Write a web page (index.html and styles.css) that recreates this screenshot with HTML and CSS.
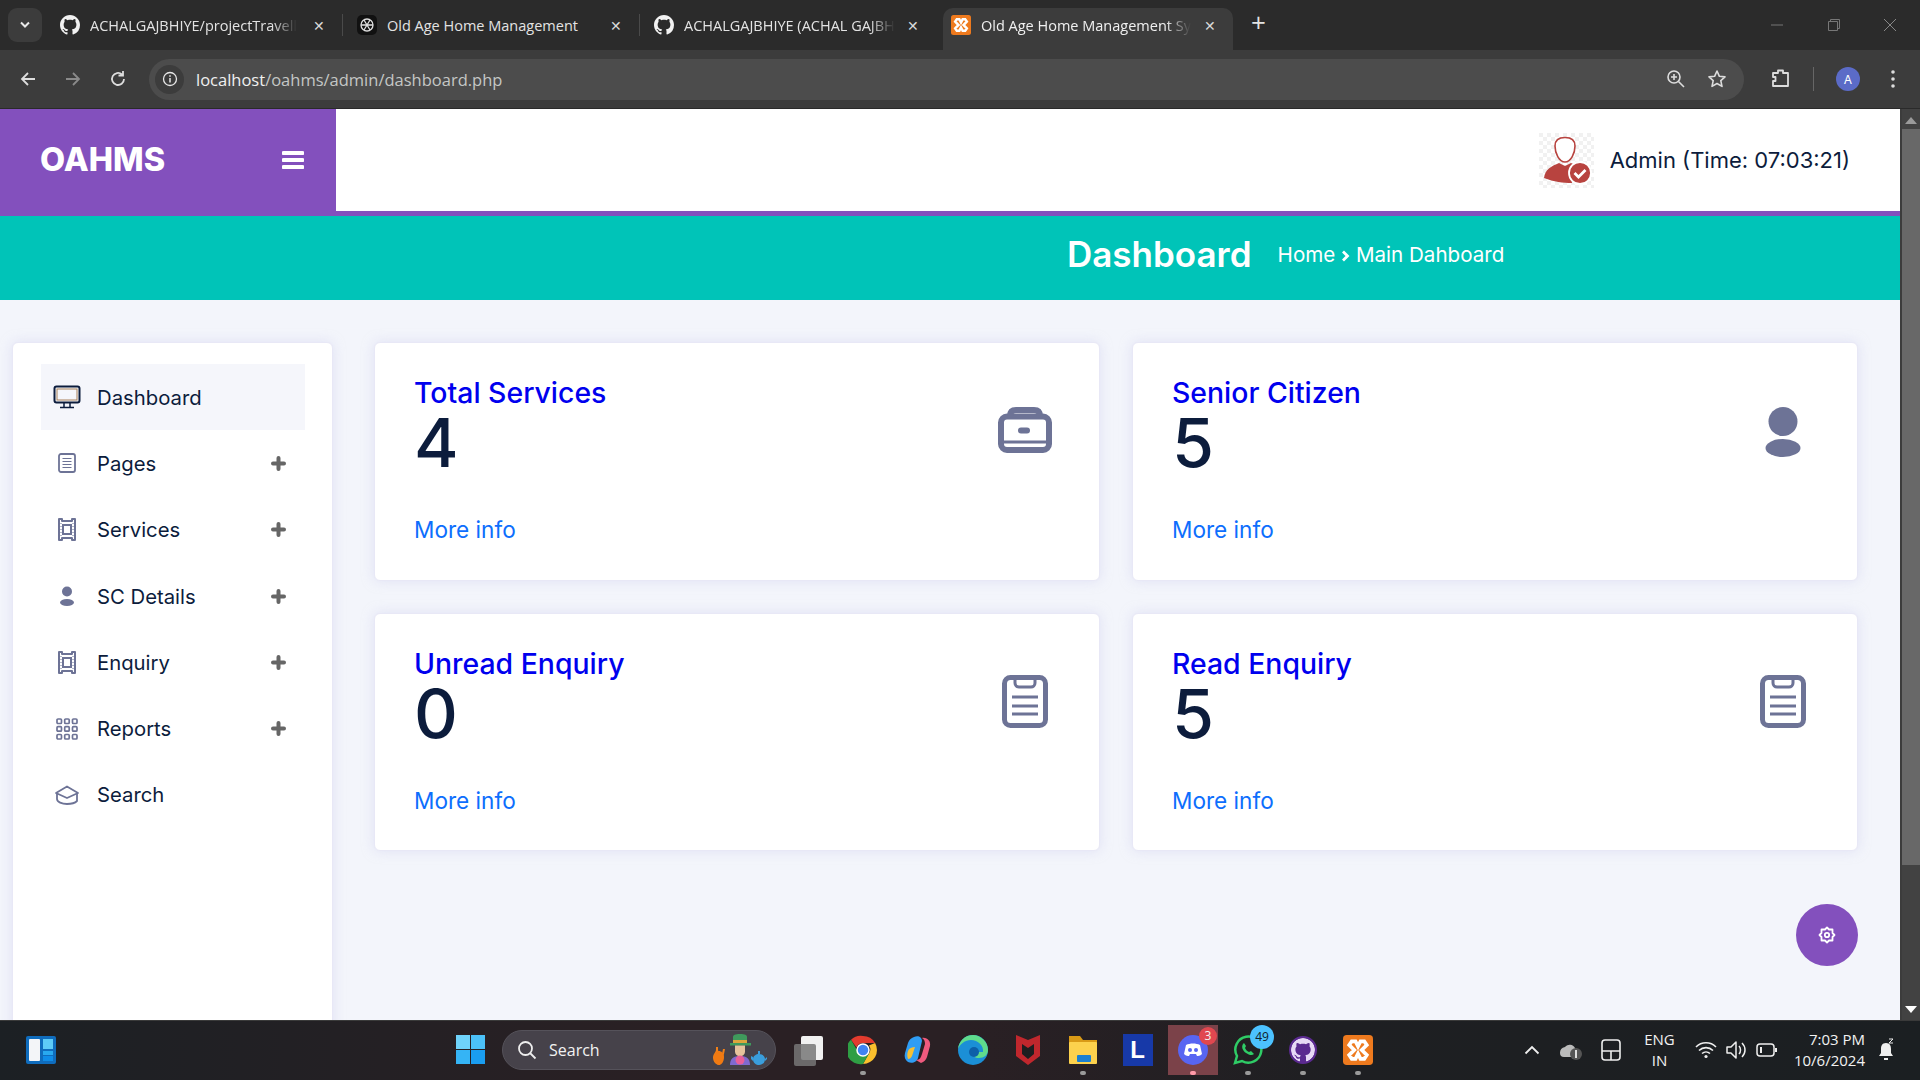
FILE: index.html
```html
<!DOCTYPE html>
<html lang="en">
<head>
  <meta charset="UTF-8" />
  <title>Old Age Home Management System</title>
  <link rel="stylesheet" href="styles.css">
</head>
<body>

  <svg class="defs" width="0" height="0">
    <symbol id="gh" viewBox="0 0 16 16"><path fill="currentColor" d="M8 0C3.58 0 0 3.58 0 8c0 3.54 2.29 6.53 5.47 7.59.4.07.55-.17.55-.38 0-.19-.01-.82-.01-1.49-2.01.37-2.53-.49-2.69-.94-.09-.23-.48-.94-.82-1.13-.28-.15-.68-.52-.01-.53.63-.01 1.08.58 1.23.82.72 1.21 1.87.87 2.33.66.07-.52.28-.87.51-1.07-1.78-.2-3.64-.89-3.64-3.95 0-.87.31-1.59.82-2.15-.08-.2-.36-1.02.08-2.12 0 0 .67-.21 2.2.82.64-.18 1.32-.27 2-.27s1.36.09 2 .27c1.53-1.04 2.2-.82 2.2-.82.44 1.1.16 1.92.08 2.12.51.56.82 1.27.82 2.15 0 3.07-1.87 3.75-3.65 3.95.29.25.54.73.54 1.48 0 1.07-.01 1.93-.01 2.2 0 .21.15.46.55.38A8.013 8.013 0 0016 8c0-4.42-3.58-8-8-8z"/></symbol>
    <symbol id="xampp" viewBox="0 0 24 24"><rect width="24" height="24" rx="3" fill="#ee7a1e"/><path fill="none" stroke="#fff" stroke-width="3" d="M7 5h3l2 4 2-4h3l2 3-4 4 4 4-2 3h-3l-2-4-2 4H7l-2-3 4-4-4-4z"/></symbol>
    <symbol id="frame" viewBox="0 0 20 23"><g fill="none" stroke="#6d7396" stroke-width="2"><path d="M2 1h3v2h10V1h3v21h-3v-2H5v2H2z" stroke-linejoin="round"/><rect x="6" y="7" width="8" height="9"/></g><path stroke="#6d7396" stroke-dasharray="1 2" d="M4 5v13M16 5v13"/></symbol>
    <symbol id="clip" viewBox="0 0 46 53"><g fill="none" stroke="#6d7396"><rect x="2.500" y="2.500" width="41" height="48" rx="6" stroke-width="5"/><path d="M13 4v4a4 4 0 004 4h12a4 4 0 004-4V4" stroke-width="3"/><path d="M10 22h26M10 31h26M10 39h26" stroke-width="3"/></g></symbol>
    <symbol id="plus" viewBox="0 0 15 15"><path stroke="#666" stroke-width="4" stroke-linecap="round" d="M7.500 2v11M2 7.500h11"/></symbol>
  </svg>

  <div class="tabstrip">
    <div class="tab-menu"><svg width="12" height="8" viewBox="0 0 12 8"><path d="M2 1.500l4 4 4-4" fill="none" stroke="#e8e8e8" stroke-width="2"/></svg></div>
    <div class="tabs">
      <div class="tab sep">
        <svg class="favicon"><use href="#gh"/></svg>
        <span class="tab-title fade">ACHALGAJBHIYE/projectTravell</span>
        <span class="tab-close">&#10005;</span>
      </div>
      <div class="tab sep">
        <svg class="favicon" viewBox="0 0 20 20"><rect width="20" height="20" rx="5" fill="#111"/><g fill="none" stroke="#ddd" stroke-width="1.300"><circle cx="10" cy="10" r="6"/><path d="M7 5l6 10M13 5L7 15M4 10h12"/></g></svg>
        <span class="tab-title">Old Age Home Management</span>
        <span class="tab-close">&#10005;</span>
      </div>
      <div class="tab">
        <svg class="favicon"><use href="#gh"/></svg>
        <span class="tab-title fade">ACHALGAJBHIYE (ACHAL GAJBH</span>
        <span class="tab-close">&#10005;</span>
      </div>
      <div class="tab active">
        <svg class="favicon"><use href="#xampp"/></svg>
        <span class="tab-title fade">Old Age Home Management Sy</span>
        <span class="tab-close">&#10005;</span>
      </div>
      <span class="new-tab">+</span>
    </div>
    <div class="win-controls">
      <svg width="14" height="14" viewBox="0 0 14 14"><path d="M1 7h12" stroke="#777"/></svg>
      <svg width="14" height="14" viewBox="0 0 14 14"><path d="M3.500 3.500V1.500h9v9h-2M1.500 3.500h9v9h-9z" fill="none" stroke="#777"/></svg>
      <svg width="14" height="14" viewBox="0 0 14 14"><path d="M1 1l12 12M13 1L1 13" stroke="#888"/></svg>
    </div>
  </div>

  <div class="toolbar">
    <svg class="nav-btn" width="18" height="18" viewBox="0 0 18 18"><path d="M16 9H3M9 3L3 9l6 6" fill="none" stroke="#ddd" stroke-width="1.800"/></svg>
    <svg class="nav-btn" width="18" height="18" viewBox="0 0 18 18"><path d="M2 9h13M9 3l6 6-6 6" fill="none" stroke="#8a8a8a" stroke-width="1.800"/></svg>
    <svg class="nav-btn" width="18" height="18" viewBox="0 0 18 18"><path d="M15 9a6 6 0 11-2-4.500M14 1v4.500H9.500" fill="none" stroke="#ddd" stroke-width="1.800"/></svg>
    <div class="omnibox">
      <span class="site-info"><svg width="16" height="16" viewBox="0 0 16 16"><circle cx="8" cy="8" r="6.500" fill="none" stroke="#e8e8e8" stroke-width="1.300"/><path d="M8 7v4.500M8 4.200v1.500" stroke="#e8e8e8" stroke-width="1.500"/></svg></span>
      <span class="url"><b>localhost</b>/oahms/admin/dashboard.php</span>
      <svg class="omni-zoom" width="20" height="20" viewBox="0 0 20 20"><g fill="none" stroke="#ddd" stroke-width="1.600"><circle cx="8" cy="8" r="6"/><path d="M12.500 12.500L18 18M8 5v6M5 8h6"/></g></svg>
      <svg class="omni-star" width="20" height="20" viewBox="0 0 20 20"><path d="M10 2l2.400 5.300 5.600.6-4.200 3.800 1.200 5.700L10 14.500 5 17.400l1.200-5.700L2 7.900l5.600-.6z" fill="none" stroke="#ddd" stroke-width="1.600" stroke-linejoin="round"/></svg>
    </div>
    <svg class="ext" width="20" height="22" viewBox="0 0 20 22"><path d="M2 5h5V2.500h5V5h5v13H2v-5h2.500V9H2z" fill="none" stroke="#ddd" stroke-width="1.800" stroke-linejoin="round"/></svg>
    <span class="tool-sep"></span>
    <span class="profile">A</span>
    <svg class="dots" width="6" height="20" viewBox="0 0 6 20"><g fill="#ddd"><circle cx="3" cy="3" r="1.800"/><circle cx="3" cy="10" r="1.800"/><circle cx="3" cy="17" r="1.800"/></g></svg>
  </div>

  <div class="viewport">
    <div class="page">
      <header class="topbar">
        <div class="brand">
          <span class="logo">OAHMS</span>
          <svg width="22" height="20" viewBox="0 0 22 20"><path d="M1.500 3h19M1.500 10h19M1.500 17h19" stroke="#fff" stroke-width="4" stroke-linecap="round"/></svg>
        </div>
        <div class="top-right">
          <svg class="avatar" width="55" height="55" viewBox="0 0 55 55">
            <defs><pattern id="chk" width="8" height="8" patternUnits="userSpaceOnUse"><rect width="8" height="8" fill="#fff"/><rect width="4" height="4" fill="#f1f1f1"/><rect x="4" y="4" width="4" height="4" fill="#f1f1f1"/></pattern></defs>
            <rect width="55" height="55" fill="url(#chk)"/>
            <path d="M16 13c0-7 5-8.500 10-8.500s10 1.500 10 8.500c0 7-4 16-10 16S16 20 16 13z" fill="#fff" stroke="#b8433f" stroke-width="1.600"/>
            <path d="M5 45c1-9 8-12 15-15l6 3 6-3c5 2 9 4 11 7-6 1-11 7-10 13-9 0-18-1-28-5z" fill="#b8433f"/>
            <circle cx="41" cy="40" r="11" fill="#b8433f" stroke="#fff" stroke-width="1.800"/>
            <path d="M35.500 40l4 4 7-7" fill="none" stroke="#fff" stroke-width="2.800"/>
          </svg>
          <span class="admin-name">Admin (Time: 07:03:21)</span>
        </div>
      </header>

      <div class="page-head">
        <h1>Dashboard</h1>
        <span class="crumbs">Home <svg width="9" height="12" viewBox="0 0 9 12"><path d="M2 1.500L6.500 6 2 10.500" fill="none" stroke="#fff" stroke-width="2.800"/></svg> Main Dahboard</span>
      </div>

      <div class="content">
        <aside class="sidebar">
          <a class="menu-item current">
            <svg class="menu-icon" width="28" height="24" viewBox="0 0 28 24"><rect x="1.500" y="1.500" width="25" height="16" rx="2" fill="none" stroke="#0c1c3c" stroke-width="2"/><rect x="4" y="4" width="20" height="11" fill="none" stroke="#a9815a" stroke-width="1"/><path d="M11 18v4M17 18v4M7 22.500h14" stroke="#0c1c3c" stroke-width="1.500"/></svg>
            <span class="menu-label">Dashboard</span>
          </a>
          <a class="menu-item">
            <svg class="menu-icon" width="18" height="20" viewBox="0 0 18 20"><rect x="1" y="1" width="16" height="18" rx="2" fill="none" stroke="#6d7396" stroke-width="1.800"/><path d="M4.500 5.500h9M4.500 8.500h9M4.500 11.500h9M4.500 14.500h9" stroke="#6d7396"/></svg>
            <span class="menu-label">Pages</span>
            <svg class="menu-plus"><use href="#plus"/></svg>
          </a>
          <a class="menu-item">
            <svg class="menu-icon" width="20" height="23"><use href="#frame"/></svg>
            <span class="menu-label">Services</span>
            <svg class="menu-plus"><use href="#plus"/></svg>
          </a>
          <a class="menu-item">
            <svg class="menu-icon" width="14" height="20" viewBox="0 0 14 20"><circle cx="7" cy="5.500" r="5" fill="#6d7396"/><ellipse cx="7" cy="16.500" rx="7" ry="3.500" fill="#6d7396"/></svg>
            <span class="menu-label">SC Details</span>
            <svg class="menu-plus"><use href="#plus"/></svg>
          </a>
          <a class="menu-item">
            <svg class="menu-icon" width="20" height="23"><use href="#frame"/></svg>
            <span class="menu-label">Enquiry</span>
            <svg class="menu-plus"><use href="#plus"/></svg>
          </a>
          <a class="menu-item">
            <svg class="menu-icon" width="22" height="22" viewBox="0 0 22 22"><g fill="none" stroke="#6d7396" stroke-width="1.700"><rect x="1" y="1" width="4.500" height="4.500" rx="1"/><rect x="8.700" y="1" width="4.500" height="4.500" rx="1"/><rect x="16.500" y="1" width="4.500" height="4.500" rx="1"/><rect x="1" y="8.700" width="4.500" height="4.500" rx="1"/><rect x="8.700" y="8.700" width="4.500" height="4.500" rx="1"/><rect x="16.500" y="8.700" width="4.500" height="4.500" rx="1"/><rect x="1" y="16.500" width="4.500" height="4.500" rx="1"/><rect x="8.700" y="16.500" width="4.500" height="4.500" rx="1"/><rect x="16.500" y="16.500" width="4.500" height="4.500" rx="1"/></g></svg>
            <span class="menu-label">Reports</span>
            <svg class="menu-plus"><use href="#plus"/></svg>
          </a>
          <a class="menu-item">
            <svg class="menu-icon" width="24" height="20" viewBox="0 0 24 20"><g fill="none" stroke="#6d7396" stroke-width="1.800" stroke-linejoin="round"><path d="M1 8l11-6.500L23 8l-11 5z"/><path d="M2 9v5c0 3 5 5 10 5 4 0 8-1 10-3V9"/></g></svg>
            <span class="menu-label">Search</span>
          </a>
        </aside>

        <main class="cards">
          <section class="card">
            <div class="card-body">
              <h2>Total Services</h2>
              <p class="count">4</p>
              <a class="more">More info</a>
            </div>
            <svg class="card-icon" width="54" height="46" viewBox="0 0 54 46"><g fill="none" stroke="#6d7396"><rect x="3" y="9.500" width="48" height="33.500" rx="6" stroke-width="6"/><path d="M12 9c0-4 2-6 6-6h18c4 0 6 2 6 6" stroke-width="6"/><path d="M3 35h48" stroke-width="3"/></g><rect x="20" y="20.500" width="12" height="6" rx="3" fill="#6d7396"/></svg>
          </section>
          <section class="card">
            <div class="card-body">
              <h2>Senior Citizen</h2>
              <p class="count">5</p>
              <a class="more">More info</a>
            </div>
            <svg class="card-icon person" width="36" height="50" viewBox="0 0 36 50"><circle cx="18" cy="14.500" r="14.500" fill="#6d7396"/><ellipse cx="18" cy="41" rx="17.500" ry="9" fill="#6d7396"/></svg>
          </section>
          <section class="card">
            <div class="card-body">
              <h2>Unread Enquiry</h2>
              <p class="count">0</p>
              <a class="more">More info</a>
            </div>
            <svg class="card-icon clip" width="46" height="53"><use href="#clip"/></svg>
          </section>
          <section class="card">
            <div class="card-body">
              <h2>Read Enquiry</h2>
              <p class="count">5</p>
              <a class="more">More info</a>
            </div>
            <svg class="card-icon clip" width="46" height="53"><use href="#clip"/></svg>
          </section>
        </main>
      </div>

      <button class="fab"><svg width="18" height="18" viewBox="0 0 18 18"><g fill="none" stroke="#fff" stroke-width="1.800"><path d="M9 1.500l2 2h3.500v3.500l2 2-2 2v3.500H11l-2 2-2-2H3.500V11l-2-2 2-2V3.500H7z" stroke-linejoin="round"/><circle cx="9" cy="9" r="2.200"/></g></svg></button>
    </div>
    <div class="scrollbar">
      <svg width="12" height="7" viewBox="0 0 12 7"><path d="M6 0l6 7H0z" fill="#9a9a9a"/></svg>
      <div class="thumb"></div>
      <svg class="arrow-down" width="12" height="7" viewBox="0 0 12 7"><path d="M6 7L0 0h12z" fill="#fff"/></svg>
    </div>
  </div>

  <footer class="taskbar">
    <svg class="widget" width="30" height="28" viewBox="0 0 30 28"><rect width="30" height="28" rx="2" fill="#0f6cbd"/><rect x="3" y="3" width="11" height="22" rx="1" fill="#f3f5f8"/><rect x="17" y="3" width="10" height="10" fill="#5ecbf7"/><rect x="17" y="15" width="10" height="4" fill="#29a9ef"/><rect x="17" y="20" width="10" height="5" fill="#0f8ce8"/></svg>
    <svg class="start" width="29" height="29" viewBox="0 0 29 29"><rect width="14" height="14" fill="#6fd3fb"/><rect x="15" width="14" height="14" fill="#4bc1f8"/><rect y="15" width="14" height="14" fill="#35b4f5"/><rect x="15" y="15" width="14" height="14" fill="#1a9df0"/></svg>
    <div class="search-pill">
      <svg width="20" height="20" viewBox="0 0 20 20"><g fill="none" stroke="#eee" stroke-width="1.800"><circle cx="8.500" cy="8.500" r="6.500"/><path d="M13 13l5.500 5.500"/></g></svg>
      <span>Search</span>
      <svg class="pill-art" width="62" height="36" viewBox="0 0 62 36">
        <path d="M15 33c-5 0-7-4-7-8 0-3 3-5 3-7V15h2v3c0 2 3 4 3 7 0 0 1-1 1-3l1-5 2 0-1 5c-1 3-3 5-4 6 0 4 0 12 0 12z" fill="#f08018"/>
        <path d="M9 25c0-4 3-6 5-6s5 2 5 6-2 8-5 8-5-4-5-8z" fill="#f07a12"/>
        <path d="M28 5c0-2 2-3 7-3s7 1 7 3v6H28z" fill="#3f9a5c"/>
        <path d="M25 11h21v2.500H25z" fill="#3f9a5c"/>
        <path d="M28 8h14v3H28z" fill="#dca63c"/>
        <path d="M30 13.500h10v6a5 5 0 01-10 0z" fill="#e6c39c"/>
        <path d="M25 33c0-6 3-9 10-9s10 3 10 9z" fill="#7f6ad0"/>
        <circle cx="35" cy="28" r="4.500" fill="#e8609a"/>
        <path d="M48 27c0-3 3-5 6-5s6 2 6 5c0 4-3 6-6 6s-6-2-6-6z" fill="#3a9edc"/>
        <path d="M53 19h2v3h-2zM60 27l2-2v2l-2 2zM48 25l-2-1v3l2 2z" fill="#3a9edc"/>
      </svg>
    </div>
    <div class="apps">
      <span class="app">
        <svg width="30" height="32" viewBox="0 0 30 32"><rect x="8" y="2" width="22" height="24" rx="2" fill="#f1f1f1"/><rect x="1" y="10" width="22" height="22" rx="2" fill="#777" opacity=".85"/></svg>
      </span>
      <span class="app running">
        <svg width="30" height="30" viewBox="0 0 30 30"><path d="M15 1a14 14 0 0112.100 7H15a7 7 0 00-6.500 4.500L3 4.800A14 14 0 0115 1z" fill="#e33b2e"/><path d="M27.100 8A14 14 0 0115 29l6-10.500a7 7 0 000-8z" fill="#fbc02d"/><path d="M15 29A14 14 0 013 4.800l6 10.200a7 7 0 0012 3.500z" fill="#2f9e44"/><circle cx="15" cy="15" r="6" fill="#3f83f2" stroke="#fff" stroke-width="1.500"/></svg>
      </span>
      <span class="app">
        <svg width="28" height="30" viewBox="0 0 28 30"><path d="M10 2c4-2 8 0 8 4l-4 17c-1 4-6 6-10 4-3-2-4-5-3-9l3-10c1-3 3-5 6-6z" fill="#2f9df4"/><path d="M18 3c5-1 9 3 8 8l-3 11c-1 3-3 5-6 6l-5-3c4 0 5-3 6-6l3-10c0-3-1-5-3-6z" fill="#f05a7e"/><path d="M4 16c1-3 4-4 7-4l-3 9c-1 2-2 3-4 3-1-3-1-5 0-8z" fill="#f6c034"/></svg>
      </span>
      <span class="app">
        <svg width="32" height="32" viewBox="0 0 32 32"><circle cx="16" cy="16" r="15" fill="#1b8fd6"/><path d="M31 16c0 5-4 8-9 8-4 0-7-2-7-5 0-2 2-4 5-4 2 0 1 2 1 3h5c1-6-5-12-12-12-6 0-11 4-13 9C2 7 8 1 16 1c8 0 15 7 15 15z" fill="#5fdc8c"/><circle cx="17" cy="18" r="5" fill="#0d5fa8"/></svg>
      </span>
      <span class="app">
        <svg width="26" height="32" viewBox="0 0 26 32"><path d="M1 1l12 5 12-5v21l-12 9-12-9z" fill="#c0272d"/><path d="M7 10l6 4 6-4v10l-6 5-6-5z" fill="#1e1e20"/></svg>
      </span>
      <span class="app running">
        <svg width="30" height="30" viewBox="0 0 30 30"><path d="M1 1h11l3 4h14v5H1z" fill="#d99a16"/><rect x="1" y="7" width="28" height="22" rx="1" fill="#fcd14d"/><rect x="9" y="20" width="14" height="7" rx="1" fill="#1a7fd0"/></svg>
      </span>
      <span class="app">
        <span class="l-icon">L</span>
      </span>
      <span class="app current running">
        <svg width="30" height="30" viewBox="0 0 30 30"><circle cx="15" cy="15" r="15" fill="#5865f2"/><path d="M8 10c4-2 10-2 14 0l2 9c-2 2-4 2-5 2l-1-2H12l-1 2c-1 0-3 0-5-2z" fill="#fff"/><circle cx="12" cy="15" r="2" fill="#5865f2"/><circle cx="18" cy="15" r="2" fill="#5865f2"/></svg>
        <span class="badge red">3</span>
      </span>
      <span class="app running">
        <svg width="30" height="30" viewBox="0 0 30 30"><path d="M2 28l2-7a13 13 0 115 5z" fill="none" stroke="#2fcc66" stroke-width="2.500"/><path d="M10 9c-2 3 0 7 3 9s6 3 8 1l-3-3-2 1c-2-1-3-2-4-4l1-2-2-3z" fill="#2fcc66"/></svg>
        <span class="badge blue">49</span>
      </span>
      <span class="app running">
        <svg class="gh-app"><use href="#gh"/></svg>
      </span>
      <span class="app running">
        <svg width="30" height="30"><use href="#xampp"/></svg>
      </span>
    </div>
    <div class="tray">
      <svg class="tray-caret" width="16" height="10" viewBox="0 0 16 10"><path d="M1.500 8.500L8 2l6.500 6.500" fill="none" stroke="#eee" stroke-width="1.800"/></svg>
      <svg class="tray-cloud" width="24" height="22" viewBox="0 0 24 22"><path d="M1 14a6 6 0 015-6 6 6 0 0110 1v9H5a4 4 0 01-4-4z" fill="#bbb"/><circle cx="17" cy="15" r="6" fill="#555"/><path d="M17 11v8" stroke="#ddd" stroke-width="2"/></svg>
      <svg class="tray-pad" width="20" height="22" viewBox="0 0 20 22"><rect x="1" y="1" width="18" height="20" rx="3" fill="none" stroke="#eee" stroke-width="1.600"/><path d="M1 12h18M10 12v9" stroke="#eee" stroke-width="1.600"/></svg>
      <div class="lang"><span>ENG</span><span>IN</span></div>
      <svg class="tray-wifi" width="22" height="18" viewBox="0 0 22 18"><g fill="none" stroke="#eee" stroke-width="1.600"><path d="M1 6a14 14 0 0120 0M4 9.500a10 10 0 0114 0M7 12.500a6 6 0 018 0"/></g><circle cx="11" cy="15.500" r="1.600" fill="#eee"/></svg>
      <svg class="tray-vol" width="22" height="20" viewBox="0 0 22 20"><g fill="none" stroke="#eee" stroke-width="1.500"><path d="M1 7v6h4l5 5V2L5 7z" stroke-linejoin="round"/><path d="M13 6c2 2 2 6 0 8M16 3c4 4 4 10 0 14"/></g></svg>
      <svg class="tray-batt" width="22" height="14" viewBox="0 0 22 14"><rect x="1" y="1" width="17" height="12" rx="3" fill="none" stroke="#eee" stroke-width="1.500"/><rect x="4" y="4" width="2" height="6" fill="#eee"/><path d="M20 5v4" stroke="#eee" stroke-width="2"/></svg>
      <div class="clock"><span>7:03 PM</span><span>10/6/2024</span></div>
      <svg class="tray-bell" width="18" height="24" viewBox="0 0 18 24"><path d="M9 5c4 0 5 3 5 6v4l2 3H2l2-3v-4c0-3 1-6 5-6z" fill="#eee"/><path d="M7 20h4v2H7z" fill="#eee"/><path d="M12 1h4l-4 4h4" fill="none" stroke="#eee"/></svg>
    </div>
  </footer>

</body>
</html>
```

FILE: styles.css
```css
* {
  box-sizing: border-box;
}

html, body {
  height: 100%;
}

body {
  margin: 0;
  display: flex;
  flex-direction: column;
  height: 1080px;
  overflow: hidden;
  font-family: Inter, "Liberation Sans", sans-serif;
  background: #f3f5fb;
}

.defs {
  position: absolute;
}

/* browser chrome */
.tabstrip {
  height: 50px;
  display: flex;
  align-items: flex-start;
  background: #2b2b2b;
  color: #e3e3e3;
  font-family: "Open Sans", sans-serif;
  font-size: 14.500px;
}

.tab-menu {
  width: 34px;
  height: 34px;
  margin: 8px 0 0 8px;
  border-radius: 9px;
  background: #3c3c3c;
  display: flex;
  align-items: center;
  justify-content: center;
}

.tabs {
  display: flex;
  margin-left: 3px;
}

.tab {
  width: 290px;
  height: 42px;
  margin: 8px 0 0 7px;
  padding: 0 10px 8px 8px;
  display: flex;
  align-items: center;
  border-radius: 10px 10px 0 0;
  position: relative;
}

.tab.sep::after {
  content: "";
  position: absolute;
  right: -1px;
  top: 6px;
  height: 22px;
  border-right: 1px solid #4a4a4a;
}

.tab.active {
  background: #3c3c3c;
  color: #f0f0f0;
}

.favicon {
  width: 20px;
  height: 20px;
  color: #f2f2f2;
  flex: none;
}

.tab-title {
  margin-left: 10px;
  white-space: nowrap;
}

.tab-title.fade {
  -webkit-mask-image: linear-gradient(to right, #000 88%, transparent);
  mask-image: linear-gradient(to right, #000 88%, transparent);
}

.tab-close {
  margin-left: auto;
  margin-right: 7px;
  font-size: 14px;
  color: #d8d8d8;
}

.new-tab {
  margin: 7px 0 0 18px;
  font-size: 26px;
  line-height: 30px;
  color: #e3e3e3;
}

.win-controls {
  margin-left: auto;
  width: 127px;
  margin-right: 23px;
  height: 50px;
  display: flex;
  align-items: center;
  justify-content: space-between;
}

.toolbar {
  height: 59px;
  padding: 0 0 0 19px;
  background: #3c3c3c;
  border-bottom: 1px solid #2a2a2a;
  display: flex;
  align-items: center;
  color: #ddd;
}

.nav-btn {
  margin-right: 27px;
  flex: none;
}

.omnibox {
  width: 1595px;
  height: 41px;
  margin-left: -5px;
  border-radius: 21px;
  background: #4c4c4c;
  display: flex;
  align-items: center;
  padding-left: 6px;
  flex: none;
}

.site-info {
  width: 29px;
  height: 29px;
  border-radius: 50%;
  background: #3c3c3c;
  display: flex;
  align-items: center;
  justify-content: center;
}

.url {
  margin-left: 12px;
  font-family: "Open Sans", sans-serif;
  font-size: 16.500px;
  color: #c4c7c5;
}

.url b {
  font-weight: 400;
  color: #f0f0f0;
}

.omni-zoom {
  margin-left: auto;
}

.omni-star {
  margin: 0 17px 0 21px;
}

.ext {
  margin-left: 27px;
}

.tool-sep {
  height: 24px;
  margin-left: 22px;
  border-left: 1px solid #666;
}

.profile {
  width: 24px;
  height: 24px;
  margin-left: 22px;
  border-radius: 50%;
  background: #5b6bc7;
  color: #fff;
  font-size: 12px;
  display: flex;
  align-items: center;
  justify-content: center;
}

.dots {
  margin-left: 30px;
}

/* page */
.viewport {
  height: 911px;
  display: flex;
}

.page {
  width: 1900px;
  position: relative;
  overflow: hidden;
  background: #f3f5fb;
}

.scrollbar {
  width: 20px;
  background: #424242;
  border-left: 2px solid #3c3c3c;
  display: flex;
  flex-direction: column;
  align-items: center;
  padding-top: 8px;
}

.thumb {
  width: 18px;
  height: 736px;
  margin-top: 5px;
  background: #686868;
}

.arrow-down {
  margin-top: auto;
  margin-bottom: 7px;
}

.topbar {
  height: 107px;
  display: flex;
  background: #fff;
  border-bottom: 5px solid #8350bd;
}

.brand {
  width: 336px;
  margin-bottom: -5px;
  height: 107px;
  padding: 0 32px 6px 40px;
  background: #8350bd;
  color: #fff;
  display: flex;
  align-items: center;
  justify-content: space-between;
}

.logo {
  font-size: 32.500px;
  font-weight: 800;
}

.top-right {
  margin-left: auto;
  padding-right: 50px;
  display: flex;
  align-items: center;
}

.avatar {
  margin-right: 16px;
}

.admin-name {
  font-size: 22px;
  color: #0c1c3c;
}

.page-head {
  height: 84px;
  padding: 0 0 8px 1067px;
  background: #00c4b8;
  color: #fff;
  display: flex;
  align-items: center;
}

.page-head h1 {
  margin: 0 26px 0 0;
  font-size: 35px;
  font-weight: 600;
}

.crumbs {
  font-size: 20.600px;
}

.content {
  padding: 42px 42px 0 12px;
  display: flex;
  align-items: flex-start;
}

.sidebar {
  width: 321px;
  height: 760px;
  padding: 21px 27px 21px 28px;
  flex: none;
  background: #fff;
  border: 1px solid #e8e8f6;
  border-radius: 6px;
  box-shadow: 0 0 12px rgba(205, 205, 240, 0.5);
}

.menu-item {
  height: 66.300px;
  padding: 0 19.500px 0 12px;
  display: flex;
  align-items: center;
  color: #0c1c3c;
}

.menu-item.current {
  background: #f5f6fb;
}

.menu-icon {
  width: 28px;
  flex: none;
}

.menu-label {
  margin-left: 16px;
  font-size: 20.300px;
}

.menu-plus {
  width: 15px;
  height: 15px;
  margin-left: auto;
}

.cards {
  flex: 1;
  margin-left: 41px;
  display: grid;
  grid-template-columns: 726px 726px;
  grid-auto-rows: 238.500px;
  gap: 32px 32px;
}

.card {
  padding: 35px 47px 0 39px;
  display: flex;
  align-items: flex-start;
  justify-content: space-between;
  background: #fff;
  border: 1px solid #e8e8f6;
  border-radius: 6px;
  box-shadow: 0 0 12px rgba(205, 205, 240, 0.5);
}

.card h2 {
  margin: 0;
  font-size: 28.400px;
  line-height: 30px;
  font-weight: 500;
  color: #0000ee;
}

.count {
  margin: 0;
  font-size: 68px;
  line-height: 68px;
  font-weight: 500;
  color: #0c1c3c;
}

.more {
  display: block;
  margin-top: 38px;
  font-size: 22.600px;
  line-height: 32px;
  color: #0d6efd;
}

.card-icon {
  margin-top: 29px;
}

.card-icon.person {
  margin-right: 9px;
}

.card-icon.clip {
  margin-top: 26px;
  margin-right: 4px;
}

.fab {
  position: absolute;
  left: 1796px;
  top: 795px;
  width: 62px;
  height: 62px;
  padding: 0;
  border: none;
  border-radius: 50%;
  background: #8350bd;
  display: flex;
  align-items: center;
  justify-content: center;
}

/* windows taskbar */
.taskbar {
  height: 60px;
  padding: 0 0 2px 26px;
  display: flex;
  align-items: center;
  border-top: 1px solid #3a3a3a;
  background: linear-gradient(to right, #1c2024, #2a2024 35%, #2a2024 50%, #1e1f22 70%, #1b1f22);
  color: #f2f2f2;
  font-family: "Open Sans", sans-serif;
  font-size: 15px;
}

.widget {
  flex: none;
}

.start {
  margin-left: 400px;
  flex: none;
}

.search-pill {
  width: 274px;
  height: 40px;
  margin-left: 17px;
  padding-left: 14px;
  border-radius: 20px;
  border: 1px solid #55525a;
  background: #46424a;
  display: flex;
  align-items: center;
  gap: 12px;
  position: relative;
  font-size: 16px;
}

.pill-art {
  position: absolute;
  right: 8px;
  bottom: 1px;
}

.apps {
  margin-left: 4px;
  display: flex;
}

.app {
  width: 55px;
  height: 50px;
  display: flex;
  align-items: center;
  justify-content: center;
  position: relative;
}

.app.running::after {
  content: "";
  position: absolute;
  bottom: 0;
  left: 25px;
  width: 6px;
  height: 4px;
  border-radius: 2px;
  background: #9a9a9a;
}

.app.current {
  background: linear-gradient(#7b4249, #7b4249) center / 50px 50px no-repeat;
}

.app.current::after {
  background: #ff9aa8;
}

.l-icon {
  width: 30px;
  height: 32px;
  background: #1739a8;
  color: #fff;
  font-family: "Liberation Sans", sans-serif;
  font-size: 24px;
  font-weight: 700;
  text-align: center;
  line-height: 32px;
}

.gh-app {
  width: 28px;
  height: 28px;
  color: #e7d9f5;
  border-radius: 50%;
  background: #5b2a90;
  border: 2px solid #5b2a90;
}

.badge {
  position: absolute;
  border-radius: 50%;
  display: flex;
  align-items: center;
  justify-content: center;
  font-size: 12px;
}

.badge.red {
  top: 2px;
  left: 34px;
  width: 18px;
  height: 18px;
  background: #e0474f;
}

.badge.blue {
  top: 0;
  left: 30px;
  width: 24px;
  height: 24px;
  background: #4cc2ff;
  color: #10202a;
}

.tray {
  margin-left: auto;
  padding-right: 25px;
  display: flex;
  align-items: center;
}

.tray-cloud {
  margin-left: 19px;
}

.tray-pad {
  margin-left: 18px;
}

.lang {
  width: 50px;
  margin-left: 14px;
  display: flex;
  flex-direction: column;
  align-items: center;
  font-size: 15px;
  line-height: 21px;
}

.tray-wifi {
  margin-left: 10px;
}

.tray-vol {
  margin-left: 9px;
}

.tray-batt {
  margin-left: 8px;
}

.clock {
  width: 87.500px;
  display: flex;
  flex-direction: column;
  align-items: flex-end;
  font-size: 15px;
  line-height: 21px;
}

.tray-bell {
  margin-left: 12px;
}
```
